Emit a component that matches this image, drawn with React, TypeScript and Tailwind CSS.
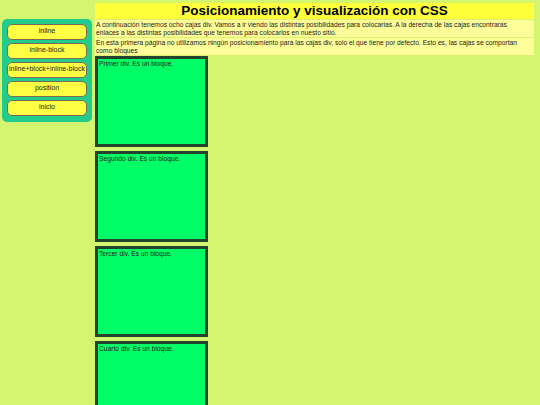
const links = ["inline", "inline-block", "inline+block+inline-block", "position", "inicio"];

const boxes = [
  "Primer div. Es un bloque.",
  "Segundo div. Es un bloque.",
  "Tercer div. Es un bloque.",
  "Cuarto div. Es un bloque.",
  "Quinto div. Es un bloque.",
  "Sexto div. Es un bloque.",
  "Séptimo div. Es un bloque.",
  "Octavo div. Es un bloque.",
];

export default function App() {
  return (
    <div
      className="min-h-[405px] w-[540px] bg-[#d4f56f] flex items-start text-[#1a1a1a]"
      style={{ fontFamily: '"Liberation Sans", Arial, sans-serif' }}
    >
      {/* Menu */}
      <nav className="ml-[2px] mt-[19px] w-[90px] rounded-[5px] bg-[#24cc8c] px-[5px] pt-[5px] pb-[6px] flex flex-col gap-[3px]">
        {links.map((l) => (
          <a
            key={l}
            className="block h-[16px] rounded-[5px] border-[1.5px] border-[#7d6a55] bg-[#ffff44] text-center text-[7px] leading-[11px] text-[#222] whitespace-nowrap"
          >
            {l}
          </a>
        ))}
      </nav>

      {/* Contenido */}
      <main className="ml-[3px] mt-[3px] w-[439px] flex flex-col">
        <h1 className="h-[16px] bg-[#ffff3a] text-center text-[13.5px] font-bold leading-[16px] text-black">
          Posicionamiento y visualización con CSS
        </h1>
        <p className="mt-[1px] bg-[#ffff99] pl-[1px] pr-[4px] pt-[1px] text-[6.7px] leading-[8px]">
          A continuación tenemos ocho cajas div. Vamos a ir viendo las distintas posibilidades para colocarlas. A la derecha de las cajas encontraras enlaces a las distintas posibilidades que tenemos para colocarlos en nuesto sitio.
        </p>
        <p className="mt-[1px] bg-[#ffff99] pl-[1px] pr-[4px] pt-[1px] text-[6.7px] leading-[8px]">
          En esta primera página no utilizamos ningún posicionamiento para las cajas div, solo el que tiene por defecto. Esto es, las cajas se comportan como bloques
        </p>
        <div className="mt-[1px] flex flex-col gap-[4px]">
          {boxes.map((b) => (
            <div
              key={b}
              className="h-[91px] w-[113px] border-[3px] border-[#22442f] bg-[#00ff66] px-[1px] pt-[1px] text-[6.7px] leading-[8px]"
            >
              {b}
            </div>
          ))}
        </div>
      </main>
    </div>
  );
}
